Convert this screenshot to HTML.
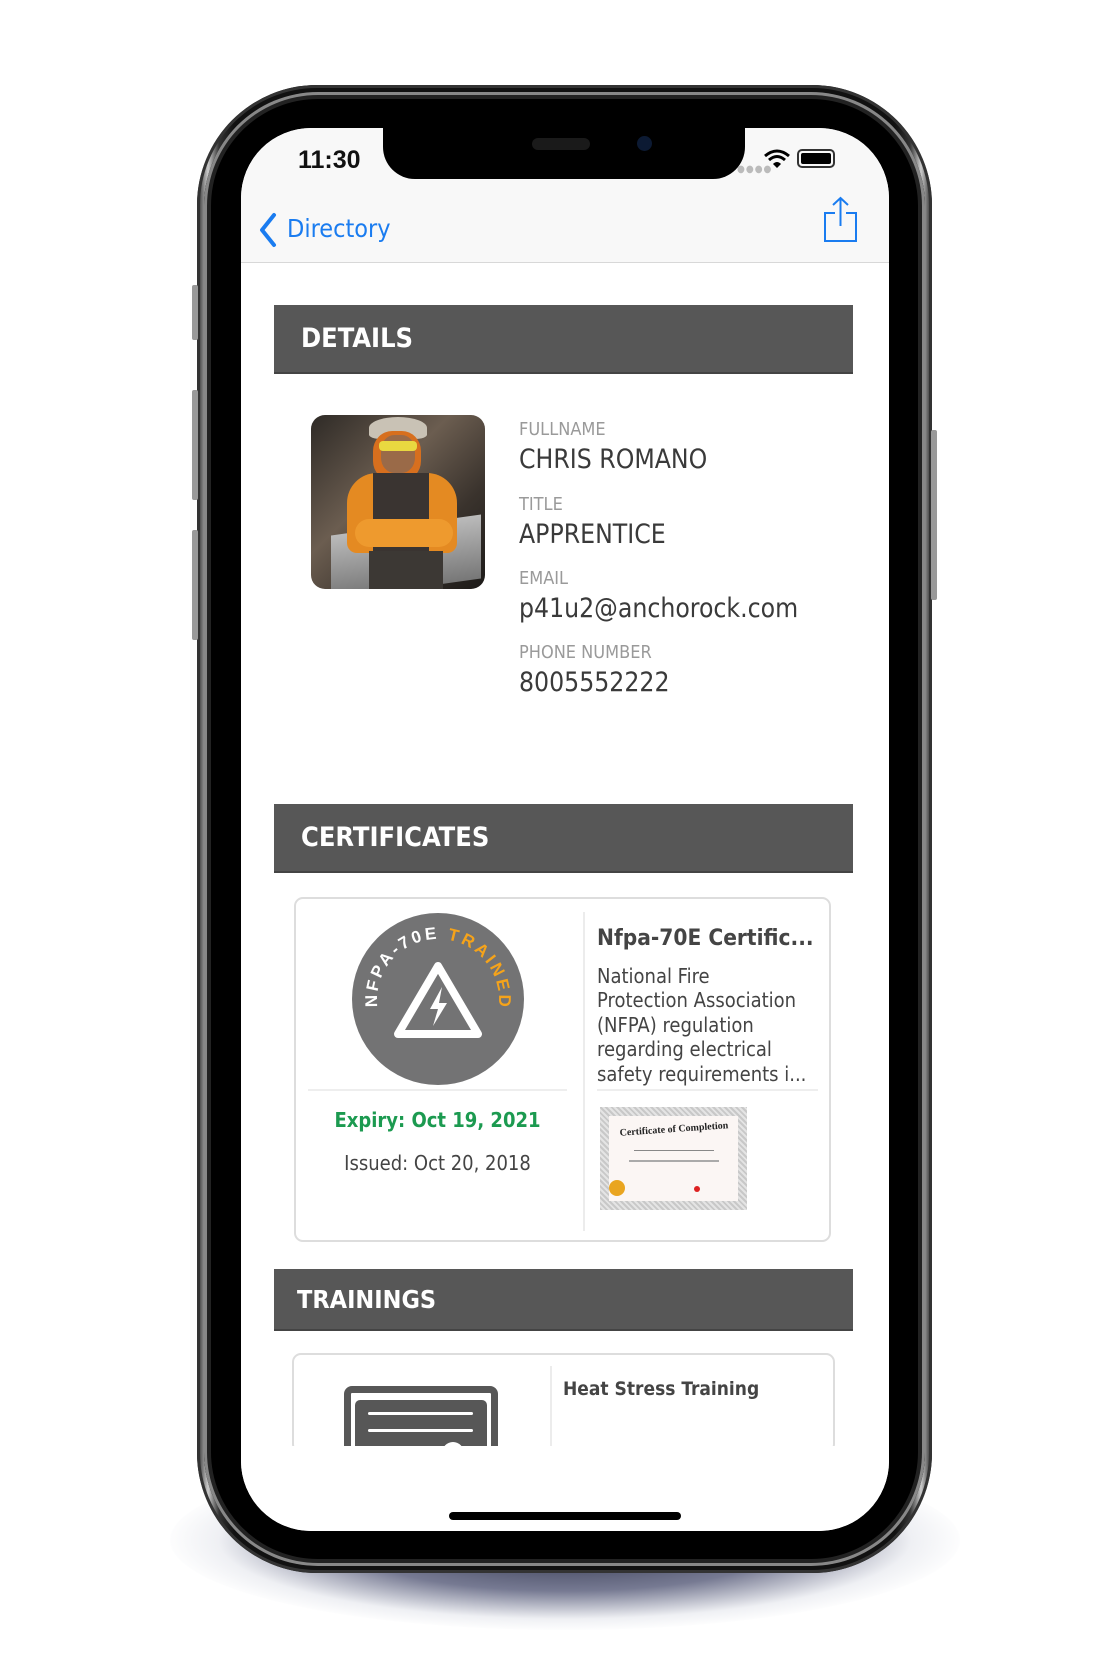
<!DOCTYPE html>
<html><head><meta charset="utf-8"><style>
*{margin:0;padding:0;box-sizing:border-box}
body{width:1100px;height:1668px;background:#fff;position:relative;overflow:hidden;font-family:"DejaVu Sans Condensed","DejaVu Sans","Liberation Sans",sans-serif}
.abs{position:absolute}
.shadow{left:170px;top:1450px;width:790px;height:180px;border-radius:50%;background:radial-gradient(ellipse at center,rgba(25,30,55,.95) 0%,rgba(60,65,100,.7) 40%,rgba(190,195,210,.25) 62%,rgba(255,255,255,0) 72%);}
.phone{left:197px;top:85px;width:735px;height:1488px;border-radius:120px;background:linear-gradient(90deg,#222,#ccc 1.5%,#333 3%,#111 5%,#111 95%,#333 97%,#ccc 98.5%,#222);box-shadow:inset 0 0 0 3px #333}
.phone2{left:204px;top:92px;width:721px;height:1474px;border-radius:114px;background:#000;box-shadow:inset 0 0 0 3px #888,inset 0 0 0 7px #222}
.screen{left:241px;top:128px;width:648px;height:1403px;border-radius:70px;background:#fff;overflow:hidden}
.nav{left:0;top:0;width:648px;height:135px;background:#f8f8f8;border-bottom:1px solid #d8d8d8}
.notch{left:142px;top:-5px;width:362px;height:56px;background:#000;border-radius:0 0 32px 32px}
.bar{background:#575757;color:#fff;font-weight:bold;font-size:27px;padding-left:27px;display:flex;align-items:center;border-bottom:2px solid #444}
.lbl{color:#9a9a9a;font-size:18px}
.val{color:#3a3a3a;font-size:26.3px}
</style></head><body>
<div class="abs shadow"></div>
<div class="abs phone"></div>
<div class="abs" style="left:192px;top:285px;width:6px;height:55px;background:#999;border-radius:2px"></div>
<div class="abs" style="left:192px;top:390px;width:6px;height:110px;background:#999;border-radius:2px"></div>
<div class="abs" style="left:192px;top:530px;width:6px;height:110px;background:#999;border-radius:2px"></div>
<div class="abs" style="left:931px;top:430px;width:6px;height:170px;background:#999;border-radius:2px"></div>
<div class="abs phone2"></div>
<div class="abs screen">
  <div class="abs nav"></div>
  <div class="abs notch"></div>
  <div class="abs" style="left:291px;top:10px;width:58px;height:12px;border-radius:6px;background:#1a1a1a"></div>
  <div class="abs" style="left:396px;top:8px;width:15px;height:15px;border-radius:50%;background:#0c1a33"></div>
  <div class="abs" style="left:57px;top:18px;font-family:'Liberation Sans',sans-serif;font-size:25px;font-weight:bold;color:#111">11:30</div>
  <div class="abs" style="left:496px;top:36px;color:#bbb;font-size:10px;letter-spacing:1px">●●●●</div>
  <svg class="abs" style="left:522px;top:20px" width="28" height="22" viewBox="0 0 28 22"><path d="M2 8 Q14 -2 26 8" stroke="#000" stroke-width="3" fill="none"/><path d="M6 12 Q14 5 22 12" stroke="#000" stroke-width="3" fill="none"/><path d="M10 16 Q14 12 18 16 L14 20Z" fill="#000"/></svg>
  <div class="abs" style="left:556px;top:21px;width:38px;height:19px;border:2px solid #333;border-radius:5px;padding:2px"><div style="background:#000;width:100%;height:100%;border-radius:2px"></div></div>
  <svg class="abs" style="left:16px;top:84px" width="22" height="36" viewBox="0 0 22 36"><path d="M17 3 L5 18 L17 33" stroke="#1a7cf0" stroke-width="4" fill="none" stroke-linecap="round" stroke-linejoin="round"/></svg>
  <div class="abs" style="left:46px;top:86px;font-size:25px;color:#1a7cf0">Directory</div>
  <svg class="abs" style="left:582px;top:68px" width="36" height="48" viewBox="0 0 36 48"><path d="M12 17 H2 V45 H33 V17 H23" stroke="#1a7cf0" stroke-width="2" fill="none"/><path d="M17.5 30 V2 M10 9 L17.5 2 L25 9" stroke="#1a7cf0" stroke-width="2" fill="none"/></svg>

  <div class="abs bar" style="left:33px;top:177px;width:579px;height:69px">DETAILS</div>
  <div class="abs" style="left:70px;top:287px;width:174px;height:174px;border-radius:14px;overflow:hidden;background:linear-gradient(135deg,#2e2a26,#6b5d50 40%,#3a332d 70%,#1c1a18)">
    <div class="abs" style="left:20px;top:110px;width:150px;height:64px;background:linear-gradient(#bbb,#777);transform:skewY(-8deg)"></div>
    <div class="abs" style="left:58px;top:2px;width:58px;height:22px;border-radius:50% 50% 20% 20%;background:#c9c2b5"></div>
    <div class="abs" style="left:62px;top:16px;width:48px;height:50px;border-radius:40%;background:#d76f1e"></div>
    <div class="abs" style="left:70px;top:20px;width:34px;height:38px;border-radius:40%;background:#9a6a48"></div>
    <div class="abs" style="left:68px;top:26px;width:38px;height:10px;border-radius:4px;background:#e9d840"></div>
    <div class="abs" style="left:36px;top:58px;width:110px;height:80px;border-radius:30px 30px 10px 10px;background:#e48a22"></div>
    <div class="abs" style="left:62px;top:58px;width:56px;height:80px;background:#3a3431"></div>
    <div class="abs" style="left:44px;top:104px;width:98px;height:28px;border-radius:14px;background:#ee9a2e"></div>
    <div class="abs" style="left:58px;top:136px;width:74px;height:38px;background:#3c3834"></div>
  </div>
  <div class="abs lbl" style="left:278px;top:291px">FULLNAME</div>
  <div class="abs val" style="left:278px;top:317px">CHRIS ROMANO</div>
  <div class="abs lbl" style="left:278px;top:366px">TITLE</div>
  <div class="abs val" style="left:278px;top:392px">APPRENTICE</div>
  <div class="abs lbl" style="left:278px;top:440px">EMAIL</div>
  <div class="abs val" style="left:278px;top:466px">p41u2@anchorock.com</div>
  <div class="abs lbl" style="left:278px;top:514px">PHONE NUMBER</div>
  <div class="abs val" style="left:278px;top:540px">8005552222</div>

  <div class="abs bar" style="left:33px;top:676px;width:579px;height:69px">CERTIFICATES</div>
  <div class="abs" style="left:53px;top:769px;width:537px;height:345px;border:2px solid #ddd;border-radius:9px"></div>
  <div class="abs" style="left:342px;top:784px;width:2px;height:319px;background:#ececec"></div>
  <svg class="abs" style="left:109px;top:783px" width="176" height="176" viewBox="0 0 176 176">
    <circle cx="88" cy="88" r="86" fill="#737374"/>
    <defs><path id="arc" d="M28 100 A61 61 0 1 1 148 100"/></defs>
    <text font-family="Liberation Sans,sans-serif" font-weight="bold" font-size="17" textLength="205" lengthAdjust="spacing"><textPath href="#arc" startOffset="4"><tspan fill="#fff">NFPA-70E </tspan><tspan fill="#f5a31a">TRAINED</tspan></textPath></text>
    <path d="M88 55 L128 123 H48 Z" stroke="#fff" stroke-width="8" fill="none" stroke-linejoin="round"/>
    <path d="M92 76 L80 98 H88 L83 115 L97 92 H89 Z" fill="#fff"/>
  </svg>
  <div class="abs" style="left:67px;top:961px;width:259px;height:2px;background:#eee"></div>
  <div class="abs" style="left:67px;top:980px;width:259px;text-align:center;color:#1c9a50;font-size:20px;font-weight:bold">Expiry: Oct 19, 2021</div>
  <div class="abs" style="left:67px;top:1023px;width:259px;text-align:center;color:#444;font-size:20px">Issued: Oct 20, 2018</div>
  <div class="abs" style="left:356px;top:797px;color:#444;font-size:22.5px;font-weight:bold">Nfpa-70E Certific...</div>
  <div class="abs" style="left:356px;top:836px;color:#444;font-size:20px;line-height:24.4px">National Fire<br>Protection Association<br>(NFPA) regulation<br>regarding electrical<br>safety requirements i...</div>
  <div class="abs" style="left:356px;top:961px;width:221px;height:2px;background:#eee"></div>
  <div class="abs" style="left:359px;top:979px;width:147px;height:103px;background:repeating-linear-gradient(45deg,#c8c8c8 0 2px,#e4e4e4 2px 4px);padding:9px">
    <div style="width:100%;height:100%;background:#fbf6f4;position:relative">
      <div class="abs" style="left:6px;top:8px;width:118px;font-family:'Liberation Serif',serif;font-weight:bold;font-size:10px;color:#222;transform:rotate(-4deg);text-align:center;white-space:nowrap">Certificate of Completion</div>
      <div class="abs" style="left:25px;top:34px;width:80px;height:1px;background:#888"></div>
      <div class="abs" style="left:20px;top:44px;width:90px;height:2px;background:#aaa"></div>
      <div class="abs" style="left:0px;top:64px;width:16px;height:16px;border-radius:50%;background:#e9a520"></div>
      <div class="abs" style="left:85px;top:70px;width:6px;height:6px;border-radius:50%;background:#d22"></div>
    </div>
  </div>

  <div class="abs bar" style="left:33px;top:1141px;width:579px;height:62px;font-size:25px;padding-left:23px">TRAININGS</div>
  <div class="abs" style="left:51px;top:1225px;width:543px;height:100px;border:2px solid #ddd;border-radius:9px"></div>
  <div class="abs" style="left:309px;top:1238px;width:2px;height:80px;background:#ececec"></div>
  <div class="abs" style="left:103px;top:1258px;width:154px;height:70px;border:7px solid #575757;border-bottom:none;border-radius:8px 8px 0 0"></div>
  <div class="abs" style="left:114px;top:1272px;width:132px;height:60px;background:#575757;border-radius:5px 5px 0 0"></div>
  <div class="abs" style="left:127px;top:1284px;width:105px;height:3px;background:#fff;border-radius:2px"></div>
  <div class="abs" style="left:127px;top:1301px;width:105px;height:3px;background:#fff;border-radius:2px"></div>
  <div class="abs" style="left:201px;top:1314px;width:22px;height:22px;border-radius:50%;background:#fff"></div>
  <div class="abs" style="left:322px;top:1250px;color:#444;font-size:19px;font-weight:bold">Heat Stress Training</div>
  <div class="abs" style="left:0;top:1318px;width:648px;height:90px;background:#fff"></div>
  <div class="abs" style="left:208px;top:1384px;width:232px;height:8px;border-radius:4px;background:#000"></div>
</div>
</body></html>
